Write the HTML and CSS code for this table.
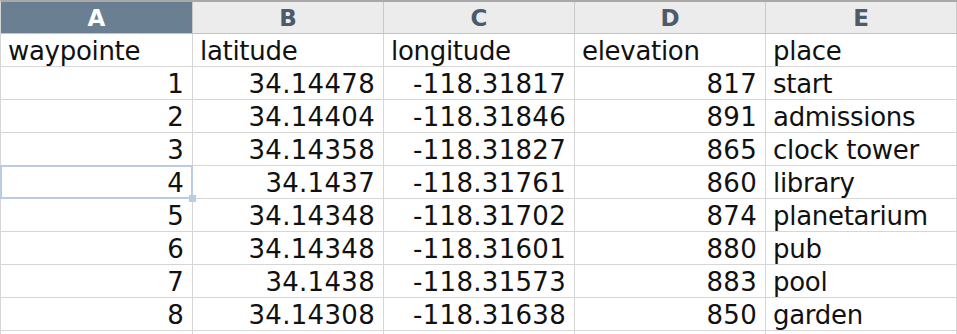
FILE: index.html
```html
<!DOCTYPE html>
<html>
<head>
<meta charset="utf-8">
<link rel="stylesheet" href="styles.css">
</head>
<body>
<div class="sheet">
  <div class="hd sel">A</div>
  <div class="hd">B</div>
  <div class="hd">C</div>
  <div class="hd">D</div>
  <div class="hd">E</div>

  <div class="c">waypointe</div><div class="c">latitude</div><div class="c">longitude</div><div class="c">elevation</div><div class="c">place</div>

  <div class="c n">1</div><div class="c n">34.14478</div><div class="c n">-118.31817</div><div class="c n">817</div><div class="c">start</div>
  <div class="c n">2</div><div class="c n">34.14404</div><div class="c n">-118.31846</div><div class="c n">891</div><div class="c">admissions</div>
  <div class="c n">3</div><div class="c n">34.14358</div><div class="c n">-118.31827</div><div class="c n">865</div><div class="c">clock tower</div>
  <div class="c n active">4</div><div class="c n">34.1437</div><div class="c n">-118.31761</div><div class="c n">860</div><div class="c">library</div>
  <div class="c n">5</div><div class="c n">34.14348</div><div class="c n">-118.31702</div><div class="c n">874</div><div class="c">planetarium</div>
  <div class="c n">6</div><div class="c n">34.14348</div><div class="c n">-118.31601</div><div class="c n">880</div><div class="c">pub</div>
  <div class="c n">7</div><div class="c n">34.1438</div><div class="c n">-118.31573</div><div class="c n">883</div><div class="c">pool</div>
  <div class="c n">8</div><div class="c n">34.14308</div><div class="c n">-118.31638</div><div class="c n">850</div><div class="c">garden</div>
  <div class="c"></div><div class="c"></div><div class="c"></div><div class="c"></div><div class="c"></div>
</div>
</body>
</html>
```
FILE: styles.css
```css
html, body {
  margin: 0;
  padding: 0;
  background: #fff;
  overflow: hidden;
}
.sheet {
  display: grid;
  grid-template-columns: 192px 191px 191px 191px 191px;
  grid-template-rows: 32px;
  grid-auto-rows: 33px;
  border-top: 2px solid #a9a9a9;
  border-left: 1px solid #d6d6d6;
  width: 957px;
  box-sizing: border-box;
  font-family: "DejaVu Sans", Verdana, sans-serif;
}
.hd {
  background: #ececec;
  color: #4c5a69;
  font-weight: bold;
  font-size: 23px;
  text-align: center;
  line-height: 32px;
  border-right: 1px solid #c9c9c9;
  border-bottom: 1px solid #c2c2c2;
  box-sizing: border-box;
}
.hd.sel {
  background: #6b7f92;
  color: #fff;
}
.c {
  font-size: 26px;
  letter-spacing: -0.3px;
  color: #111;
  line-height: 32px;
  padding: 1px 8px 0 7px;
  border-right: 1px solid #d6d6d6;
  border-bottom: 1px solid #d6d6d6;
  box-sizing: border-box;
  white-space: nowrap;
  overflow: hidden;
  position: relative;
}
.c.n {
  text-align: right;
  letter-spacing: 0.3px;
}
.c.active {
  overflow: visible;
}
.c.active::after {
  content: "";
  position: absolute;
  left: -1px;
  top: -1px;
  right: -1px;
  bottom: -1px;
  border: 2px solid #b9cce4;
}
.c.active::before {
  content: "";
  position: absolute;
  right: -4px;
  bottom: -4px;
  width: 7px;
  height: 7px;
  background: #b9cce4;
  z-index: 1;
}
```
